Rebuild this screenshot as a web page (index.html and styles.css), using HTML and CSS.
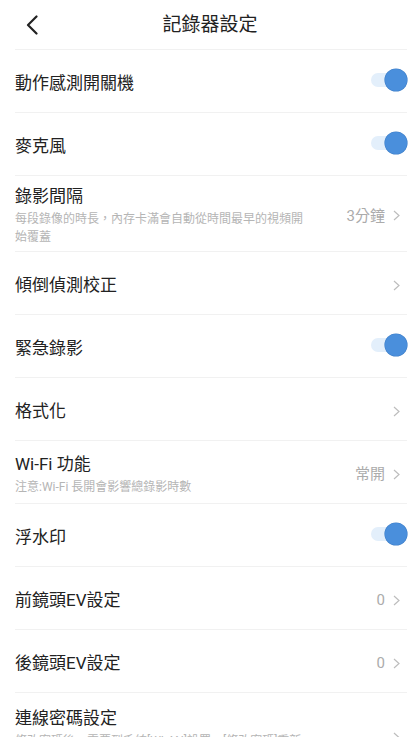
FILE: index.html
```html
<!DOCTYPE html>
<html lang="zh-Hant">
<head>
  <meta charset="UTF-8" />
  <meta name="viewport" content="width=device-width, initial-scale=1" />
  <title>記錄器設定</title>
  <link rel="stylesheet" href="styles.css">
</head>
<body>
  <div class="header">
    <div class="back">
      <svg width="12" height="20" viewBox="0 0 12 20"><polyline points="10.5,1.5 2,10 10.5,18.5" fill="none" stroke="#222" stroke-width="2.2" stroke-linecap="round" stroke-linejoin="round"/></svg>
    </div>
    <div class="title">記錄器設定</div>
    <div></div>
  </div>

  <div class="list">
    <div class="row">
      <div class="text"><div class="name">動作感測開關機</div></div>
      <div class="toggle"></div>
    </div>
    <div class="row">
      <div class="text"><div class="name">麥克風</div></div>
      <div class="toggle"></div>
    </div>
    <div class="row">
      <div class="text">
        <div class="name">錄影間隔</div>
        <div class="sub">每段錄像的時長，內存卡滿會自動從時間最早的視頻開始覆蓋</div>
      </div>
      <div class="value">3分鐘</div>
      <svg class="chev" width="7" height="11" viewBox="0 0 7 11"><polyline points="1,1 6,5.5 1,10" fill="none" stroke="#bdbdbd" stroke-width="1.2"/></svg>
    </div>
    <div class="row">
      <div class="text"><div class="name">傾倒偵測校正</div></div>
      <svg class="chev" width="7" height="11" viewBox="0 0 7 11"><polyline points="1,1 6,5.5 1,10" fill="none" stroke="#bdbdbd" stroke-width="1.2"/></svg>
    </div>
    <div class="row">
      <div class="text"><div class="name">緊急錄影</div></div>
      <div class="toggle"></div>
    </div>
    <div class="row">
      <div class="text"><div class="name">格式化</div></div>
      <svg class="chev" width="7" height="11" viewBox="0 0 7 11"><polyline points="1,1 6,5.5 1,10" fill="none" stroke="#bdbdbd" stroke-width="1.2"/></svg>
    </div>
    <div class="row">
      <div class="text">
        <div class="name">Wi-Fi 功能</div>
        <div class="sub">注意:Wi-Fi 長開會影響總錄影時數</div>
      </div>
      <div class="value">常開</div>
      <svg class="chev" width="7" height="11" viewBox="0 0 7 11"><polyline points="1,1 6,5.5 1,10" fill="none" stroke="#bdbdbd" stroke-width="1.2"/></svg>
    </div>
    <div class="row">
      <div class="text"><div class="name">浮水印</div></div>
      <div class="toggle"></div>
    </div>
    <div class="row">
      <div class="text"><div class="name">前鏡頭EV設定</div></div>
      <div class="value">0</div>
      <svg class="chev" width="7" height="11" viewBox="0 0 7 11"><polyline points="1,1 6,5.5 1,10" fill="none" stroke="#bdbdbd" stroke-width="1.2"/></svg>
    </div>
    <div class="row">
      <div class="text"><div class="name">後鏡頭EV設定</div></div>
      <div class="value">0</div>
      <svg class="chev" width="7" height="11" viewBox="0 0 7 11"><polyline points="1,1 6,5.5 1,10" fill="none" stroke="#bdbdbd" stroke-width="1.2"/></svg>
    </div>
    <div class="row last">
      <div class="text">
        <div class="name">連線密碼設定</div>
        <div class="sub">修改密碼後，需要到系統[WLAN]設置，[修改密碼]重新連線記錄器</div>
      </div>
      <svg class="chev" width="7" height="11" viewBox="0 0 7 11"><polyline points="1,1 6,5.5 1,10" fill="none" stroke="#bdbdbd" stroke-width="1.2"/></svg>
    </div>
  </div>
</body>
</html>
```

FILE: styles.css
```css
body {
  margin: 0;
  background: #fff;
  font-family: Roboto, "Noto Sans CJK TC", sans-serif;
  color: #222;
  overflow: hidden;
}
.header {
  height: 49px;
  display: grid;
  grid-template-columns: 1fr auto 1fr;
  align-items: center;
}
.back {
  padding-left: 26px;
  display: flex;
  align-items: center;
}
.title {
  font-size: 19px;
  line-height: 24px;
  padding-left: 2px;
}
.list {
  margin: 0 11px 0 15px;
}
.row {
  box-sizing: border-box;
  min-height: 63px;
  padding: 9px 0 5px;
  border-top: 1px solid #f1f1f1;
  display: flex;
  align-items: center;
}
.row.last {
  padding-top: 14px;
}
.text {
  flex: 1;
}
.name {
  font-size: 17px;
  line-height: 22px;
}
.sub {
  font-size: 12px;
  line-height: 18px;
  color: #b5b5b5;
  margin-top: 3px;
  max-width: 296px;
}
.value {
  font-size: 15px;
  color: #ababab;
  line-height: 22px;
  margin-right: 8px;
}
.chev {
  margin-right: 7px;
}
.toggle {
  position: relative;
  width: 36px;
  height: 22px;
  margin-top: -6px;
}
.toggle::before {
  content: "";
  position: absolute;
  left: 0;
  top: 4px;
  width: 30px;
  height: 14px;
  border-radius: 7px;
  background: #e3effb;
}
.toggle::after {
  content: "";
  position: absolute;
  right: 0;
  top: 0;
  width: 22px;
  height: 22px;
  border-radius: 50%;
  background: #4a8fdc;
  box-shadow: 0 0 0 0.6px #3f7fc8;
}
```
